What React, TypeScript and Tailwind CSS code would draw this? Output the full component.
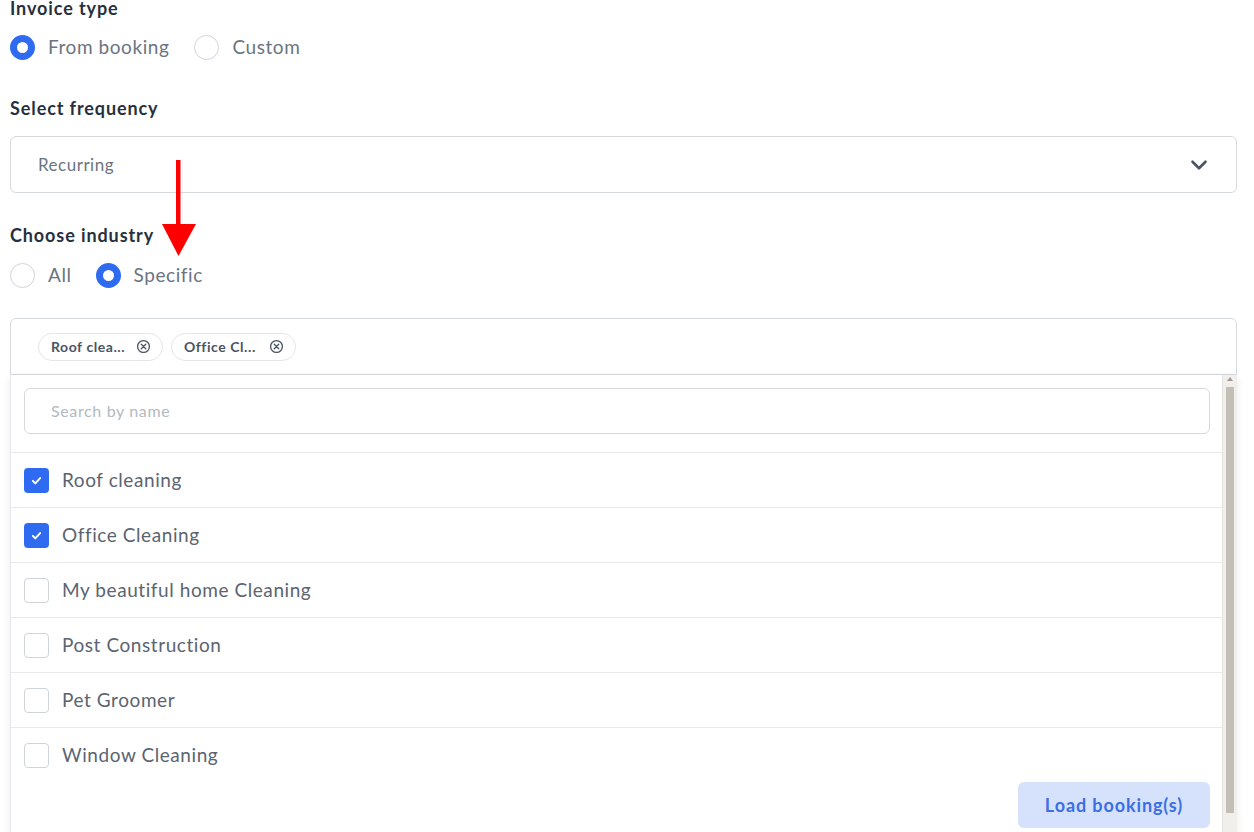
import React from "react";
import { ChevronDown } from "lucide-react";

const INDUSTRIES = [
  { name: "Roof cleaning", checked: true },
  { name: "Office Cleaning", checked: true },
  { name: "My beautiful home Cleaning", checked: false },
  { name: "Post Construction", checked: false },
  { name: "Pet Groomer", checked: false },
  { name: "Window Cleaning", checked: false },
] as const;

function Radio({ label, checked }: { label: string; checked?: boolean }) {
  return (
    <label className="flex items-center gap-[13px]">
      {checked ? (
        <span className="h-[25px] w-[25px] rounded-full border-[7px] border-[#2f6bf0] bg-white" />
      ) : (
        <span className="h-[25px] w-[25px] rounded-full border-[1.5px] border-[#cfd4da] bg-white" />
      )}
      <span className="text-[19px] tracking-[0.03em] text-[#6b7480]">{label}</span>
    </label>
  );
}

function Chip({ label }: { label: string }) {
  return (
    <span className="flex h-[28px] w-[125px] items-center justify-between rounded-full border border-[#e3e6ea] pl-[12px] pr-[11px]">
      <span className="text-[14px] font-bold tracking-[0.04em] text-[#4a5462]">{label}</span>
      <svg width="15" height="15" viewBox="0 0 16 16" fill="none" stroke="#4a5462" strokeWidth="1.4">
        <circle cx="8" cy="8" r="6.3" />
        <path d="M5.6 5.6l4.8 4.8M10.4 5.6l-4.8 4.8" strokeLinecap="round" />
      </svg>
    </span>
  );
}

function Checkbox({ checked }: { checked: boolean }) {
  if (checked) {
    return (
      <span className="flex h-[25px] w-[25px] items-center justify-center rounded-[4px] bg-[#2f6bf0]">
        <svg width="13" height="13" viewBox="0 0 16 16" fill="none" stroke="white" strokeWidth="2.4" strokeLinecap="round" strokeLinejoin="round">
          <path d="M3.5 8.5l3 3 6-6.5" />
        </svg>
      </span>
    );
  }
  return <span className="h-[25px] w-[25px] rounded-[4px] border-[1.5px] border-[#cfd4da] bg-white" />;
}

function RedArrow() {
  return (
    <svg className="absolute left-[160px] top-[158px]" width="40" height="100" viewBox="0 0 40 100">
      <rect x="16" y="2" width="4.5" height="70" fill="#ff0000" />
      <polygon points="2,66 36,66 18.5,98" fill="#ff0000" />
    </svg>
  );
}

export default function App() {
  return (
    <div className="relative h-[832px] w-[1254px] overflow-hidden bg-white pl-[10px] pr-[17px] font-['Lato','Liberation_Sans',sans-serif]">
      <p className="-mt-[2px] text-[18px] font-bold leading-[20px] tracking-[0.05em] text-[#27303c]">Invoice type</p>
      <div className="mt-[17px] flex h-[24px] items-center gap-[25px]">
        <Radio label="From booking" checked />
        <Radio label="Custom" />
      </div>

      <p className="mt-[39px] text-[18px] font-bold leading-[20px] tracking-[0.05em] text-[#27303c]">Select frequency</p>
      <div className="mt-[18px] flex h-[57px] items-center justify-between rounded-[6px] border border-[#d6dade] pl-[27px] pr-[24px]">
        <span className="text-[17px] tracking-[0.03em] text-[#6b7480]">Recurring</span>
        <ChevronDown size={26} strokeWidth={2.4} color="#4a5462" />
      </div>

      <p className="mt-[32px] text-[18px] font-bold leading-[20px] tracking-[0.05em] text-[#27303c]">Choose industry</p>
      <div className="mt-[18px] flex h-[24px] items-center gap-[24px]">
        <Radio label="All" />
        <Radio label="Specific" checked />
      </div>

      <div className="mt-[31px] flex h-[57px] items-center gap-[8px] rounded-t-[6px] border border-[#d6dade] pl-[27px]">
        <Chip label="Roof clea..." />
        <Chip label="Office Cl..." />
      </div>

      <div className="flex h-[460px] border-l border-[#e5e7eb] shadow-[0_2px_8px_rgba(0,0,0,0.08)]">
        <div className="flex flex-1 flex-col">
          <div className="pb-[18px] pl-[13px] pr-[12px] pt-[13px]">
            <div className="flex h-[46px] items-center rounded-[6px] border border-[#d6dade] pl-[26px]">
              <span className="text-[16px] tracking-[0.04em] text-[#b3b9c1]">Search by name</span>
            </div>
          </div>
          {INDUSTRIES.map((item) => (
            <div key={item.name} className="flex h-[55px] items-center gap-[13px] border-t border-[#e8eaed] pl-[13px]">
              <Checkbox checked={item.checked} />
              <span className="text-[19px] tracking-[0.03em] text-[#5b6470]">{item.name}</span>
            </div>
          ))}
          <div className="flex justify-end pr-[12px]">
            <button className="h-[46px] w-[192px] rounded-[6px] bg-[#d6e2fb] text-[18px] font-bold tracking-[0.05em] text-[#3b6fe6]">
              Load booking(s)
            </button>
          </div>
        </div>
        <div className="flex w-[15px] flex-col items-center border-l border-[#e6e4e0] bg-[#f1efeb] pt-[2px]">
          <span className="h-0 w-0 border-x-[3px] border-b-[4px] border-x-transparent border-b-[#9e9a93]" />
          <div className="mt-[6px] h-[426px] w-[8px] bg-[#c3bfb7]" />
        </div>
      </div>

      <RedArrow />
    </div>
  );
}
